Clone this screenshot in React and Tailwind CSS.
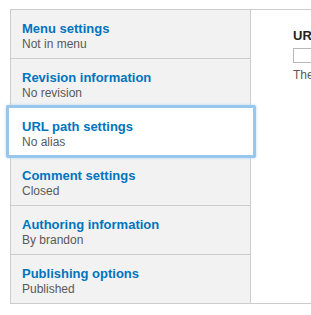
import React from 'react';

const tabs = [
  { title: 'Menu settings', summary: 'Not in menu' },
  { title: 'Revision information', summary: 'No revision' },
  { title: 'URL path settings', summary: 'No alias', selected: true },
  { title: 'Comment settings', summary: 'Closed' },
  { title: 'Authoring information', summary: 'By brandon' },
  { title: 'Publishing options', summary: 'Published' },
];

const App = () => {
  return (
    <div className="w-[311px] h-[315px] overflow-hidden bg-white pt-[9px] pl-[10px] font-['Liberation_Sans',Arial,sans-serif]">
      <div className="flex border border-r-0 border-[#ccc]">
        <ul className="w-[240px] shrink-0 bg-[#f2f2f2] border-r border-[#ccc]">
          {tabs.map((tab, i) => (
            <li
              key={tab.title}
              className={`relative ${i < tabs.length - 1 ? 'h-[49px] border-b border-[#ccc]' : 'h-[48px]'}`}
            >
              {tab.selected && (
                <div className="absolute -left-[5px] -right-[6px] -top-[3px] -bottom-[2px] z-10 bg-white border-[3px] border-[#97c7ec] rounded-[2px] shadow-[0_0_3px_#b6d8f2]" />
              )}
              <a href="#" className="relative z-20 block pl-[11px] pt-[11px]">
                <div className="text-[13px] leading-[16px] font-bold text-[#0074bd]">{tab.title}</div>
                <div className="text-[12px] leading-[15px] text-[#595959]">{tab.summary}</div>
              </a>
            </li>
          ))}
        </ul>
        <div className="flex-1 pl-[42px] pt-[18px]">
          <div className="text-[13px] leading-[16px] font-bold text-[#222]">URL</div>
          <div className="mt-[4px] h-[15px] w-[200px] border border-[#b8b8b8] bg-white" />
          <div className="mt-[5px] text-[12px] leading-[15px] text-[#595959]">The</div>
        </div>
      </div>
    </div>
  );
};

export default App;
